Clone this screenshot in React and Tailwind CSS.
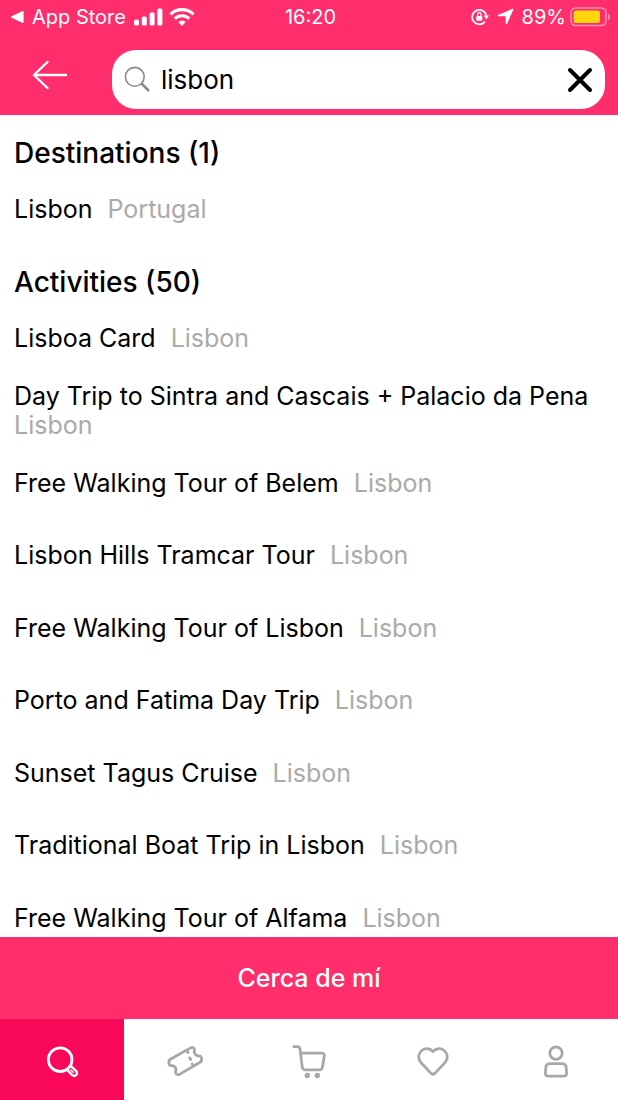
const destinations = [{ name: "Lisbon", place: "Portugal" }];

const activities = [
  { name: "Lisboa Card", place: "Lisbon" },
  { name: "Day Trip to Sintra and Cascais + Palacio da Pena", place: "Lisbon" },
];

const tours = [
  { name: "Free Walking Tour of Belem", place: "Lisbon" },
  { name: "Lisbon Hills Tramcar Tour", place: "Lisbon" },
  { name: "Free Walking Tour of Lisbon", place: "Lisbon" },
  { name: "Porto and Fatima Day Trip", place: "Lisbon" },
  { name: "Sunset Tagus Cruise", place: "Lisbon" },
  { name: "Traditional Boat Trip in Lisbon", place: "Lisbon" },
  { name: "Free Walking Tour of Alfama", place: "Lisbon" },
];

function StatusBar() {
  return (
    <div className="grid grid-cols-[1fr_auto_1fr] items-center h-[33px] pl-[11px] pr-2 font-[Inter,sans-serif] text-[20px] leading-8">
      <div className="flex items-center">
        <svg width="13" height="12" viewBox="0 0 13 12" fill="currentColor" aria-hidden="true">
          <path d="M12.6 1v10c0 .8-.7 1.1-1.4.8L.5 6.7c-.6-.3-.6-1.1 0-1.4L11.2.2c.7-.3 1.4 0 1.4.8z" />
        </svg>
        <span className="ml-2">App Store</span>
        <svg className="ml-2" width="29" height="18" viewBox="0 0 29 18" fill="currentColor" aria-hidden="true">
          <rect x="0" y="11.5" width="5" height="6" rx="1.5" />
          <rect x="7.800" y="8.5" width="5" height="9" rx="1.5" />
          <rect x="15.600" y="4.5" width="5" height="13" rx="1.5" />
          <rect x="23.400" y="0.5" width="5" height="17" rx="1.5" />
        </svg>
        <svg className="ml-1.5" width="26" height="18" viewBox="0 0 26 18" fill="none" stroke="currentColor" strokeWidth="3.2" aria-hidden="true">
          <path d="M1.5 6.300a16.500 16.500 0 0 1 23 0" />
          <path d="M5.700 10.700a10.500 10.500 0 0 1 14.600 0" />
          <path d="M13 18l-3.700-3.900a5.300 5.300 0 0 1 7.400 0z" fill="currentColor" stroke="none" />
        </svg>
      </div>
      <time>16:20</time>
      <div className="flex items-center justify-end">
        <svg width="18" height="18" viewBox="0 0 18 18" fill="none" stroke="currentColor" strokeWidth="1.7" aria-hidden="true">
          <path d="M14 13.600A7.200 7.200 0 1 1 15.400 7.500" />
          <path d="M12.600 7.500H18l-2.700 4z" fill="currentColor" stroke="none" />
          <rect x="5.300" y="7.900" width="6" height="4.800" rx="0.8" fill="currentColor" stroke="none" />
          <path d="M6.600 8V6.300a1.700 1.700 0 0 1 3.400 0V8" strokeWidth="1.2" />
        </svg>
        <svg className="ml-2" width="17" height="17" viewBox="0 0 17 17" fill="currentColor" aria-hidden="true">
          <path d="M15.600.8c.6-.3 1 .1.800.7l-6.300 14.300c-.3.700-1.300.600-1.400-.200V8.700c0-.3-.1-.4-.4-.4H1.400C.6 8.300.4 7.300 1.100 7z" />
        </svg>
        <span className="ml-2">89%</span>
        <svg className="ml-1" width="40" height="20" viewBox="0 0 40 20" fill="none" aria-hidden="true">
          <rect x="1" y="1" width="35" height="17.5" rx="4.500" stroke="#ff8fb3" strokeWidth="1.6" />
          <rect x="3.500" y="3.500" width="26.500" height="12.500" rx="2.500" fill="#ffd60a" />
          <path d="M38 7v6c2.700-1 2.700-5 0-6z" fill="#ff8fb3" />
        </svg>
      </div>
    </div>
  );
}

function SearchBar() {
  return (
    <div className="flex items-start h-[82px] pt-[17px] pr-[13px]">
      <button type="button" aria-label="Back" className="flex justify-center w-[112px] pt-2.5">
        <svg className="-ml-3" width="36" height="30" viewBox="0 0 36 30" fill="none" stroke="currentColor" strokeWidth="2.4" strokeLinecap="round" strokeLinejoin="round">
          <path d="M34 15H2M15.500 2L2 15l13.500 13" />
        </svg>
      </button>
      <form className="flex flex-1 min-w-0 items-center h-[59px] px-3 rounded-[24px] bg-white text-black">
        <svg className="shrink-0" width="27" height="27" viewBox="0 0 27 27" fill="none" stroke="#8a8a8e" aria-hidden="true">
          <circle cx="10.800" cy="10.800" r="9.400" strokeWidth="1.6" />
          <path d="M17.500 17.500l7.500 7.500" strokeWidth="2.5" />
        </svg>
        <input
          type="text"
          defaultValue="lisbon"
          aria-label="Search"
          className="flex-1 min-w-0 ml-2.5 bg-transparent outline-none font-[Inter,sans-serif] text-[26px] leading-9"
        />
        <button type="button" aria-label="Clear" className="shrink-0">
          <svg width="26" height="26" viewBox="0 0 26 26" stroke="currentColor" strokeWidth="4" strokeLinecap="round">
            <path d="M3 3l20 20M23 3L3 23" />
          </svg>
        </button>
      </form>
    </div>
  );
}

function Result({ item }) {
  return (
    <a href="#" className="block">
      <span className="mr-2">{item.name}</span>{" "}
      <span className="inline-block text-[#aaaaaa]">{item.place}</span>
    </a>
  );
}

function TabIcon({ children }) {
  return (
    <svg width="40" height="40" viewBox="0 0 40 40" fill="none" stroke="currentColor" strokeWidth="2.8" strokeLinecap="round" strokeLinejoin="round" aria-hidden="true">
      {children}
    </svg>
  );
}

function TabBar() {
  return (
    <nav className="grid grid-cols-5 h-[81px] bg-white text-[#a8a8a8]">
      <a href="#" aria-label="Search" aria-current="page" className="flex items-center justify-center bg-[#f90758] text-white">
        <TabIcon>
          <circle cx="18.200" cy="19.700" r="11.800" />
          <path d="M25.300 30l4.700 4.900c3.200 2.600 6.600-.9 4-4.100l-5-4.600" strokeWidth="2.4" />
          <path d="M29 30l2.300 2.300" strokeWidth="1.6" />
        </TabIcon>
      </a>
      <a href="#" aria-label="Tickets" className="flex items-center justify-center">
        <TabIcon>
          <path d="M5.800 19L25.500 7.900c1.700-.9 3-.5 3.800 1l.2.500c-1.300 3.800 1.800 7.200 5.700 6.700.9.200 1.100.9 1.300 1.900.5 1.900.2 3.300-1.400 4.200L15.400 33.900c-2.200 1.200-3.800 1.100-4.700-.7-.4-.8-.3-1.400 0-2.200 1.200-3-1.600-5.800-4.600-5.300-1 .1-1.600-.5-1.900-1.400-.8-2.200-.3-4.200 1.600-5.300z" />
          <path d="M22.500 11.500l.5 1M24.800 18l.9 1.500M27.300 24l.4.600" />
        </TabIcon>
      </a>
      <a href="#" aria-label="Cart" className="flex items-center justify-center">
        <TabIcon>
          <path d="M4.700 6.600h3.500c1.700 0 2.600.8 2.800 2.500l2.200 17.800c.2 1.900 1.200 2.900 2.900 2.900h14.400c1.700 0 2.700-.9 2.900-2.600l1.900-11.300c.3-1.700-.6-2.700-2.300-2.700H11.500" />
          <circle cx="18.300" cy="35.500" r="2.700" fill="currentColor" stroke="none" />
          <circle cx="28.300" cy="35.500" r="2.700" fill="currentColor" stroke="none" />
        </TabIcon>
      </a>
      <a href="#" aria-label="Favorites" className="flex items-center justify-center">
        <TabIcon>
          <path d="M20 11.700c-2.700-3.500-7.800-4-11.200-1.200-3.700 3-4.100 8.200-1.100 11.700l10.400 11.200c1.300 1.200 2.500 1.200 3.800 0l10.400-11.200c3-3.500 2.600-8.700-1.100-11.700-3.400-2.800-8.500-2.300-11.200 1.200z" />
        </TabIcon>
      </a>
      <a href="#" aria-label="Profile" className="flex items-center justify-center">
        <TabIcon>
          <circle cx="20" cy="13.200" r="6.200" />
          <path d="M14 23.700h12c2.700 0 4 1.500 4.200 4l.4 5c.2 2.300-.9 3.500-3.100 3.500h-15c-2.200 0-3.300-1.200-3.100-3.500l.4-5c.2-2.500 1.500-4 4.200-4z" />
        </TabIcon>
      </a>
    </nav>
  );
}

export default function App() {
  return (
    <div className="flex flex-col h-screen bg-white font-[Inter,sans-serif] text-black">
      <header className="shrink-0 bg-[#fe2d6b] text-white">
        <StatusBar />
        <SearchBar />
      </header>

      <main className="flex-1 min-h-0 overflow-hidden px-3.5 pt-5 text-[25px] leading-[29px]">
        <h2 className="text-[28px] leading-9 font-medium">Destinations (1)</h2>
        <ul className="pt-6">
          {destinations.map((item) => (
            <li key={item.name}>
              <Result item={item} />
            </li>
          ))}
        </ul>

        <h2 className="pt-10 text-[28px] leading-9 font-medium">Activities (50)</h2>
        <ul className="flex flex-col gap-[29px] pt-6">
          {activities.map((item) => (
            <li key={item.name}>
              <Result item={item} />
            </li>
          ))}
        </ul>
        <ul className="pt-[29px]">
          {tours.map((item) => (
            <li key={item.name} className="odd:mb-[43px] even:mb-11">
              <Result item={item} />
            </li>
          ))}
        </ul>
      </main>

      <footer className="shrink-0">
        <button type="button" className="block w-full h-[82px] pt-0.5 bg-[#fe2d6b] text-[25px] font-medium text-white">
          Cerca de mí
        </button>
        <TabBar />
      </footer>
    </div>
  );
}
